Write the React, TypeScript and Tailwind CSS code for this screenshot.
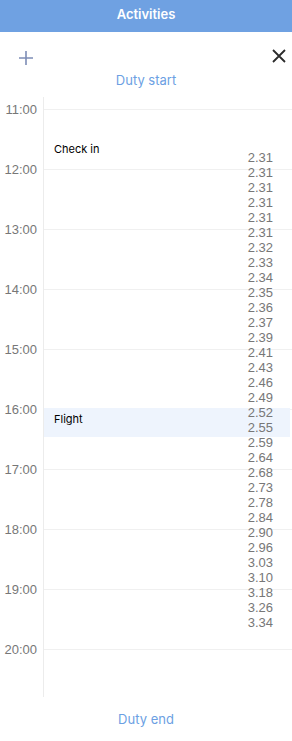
const hours = ["11:00", "12:00", "13:00", "14:00", "15:00", "16:00", "17:00", "18:00", "19:00", "20:00"];

const values = [
    "2.31", "2.31", "2.31", "2.31", "2.31", "2.31", "2.32", "2.33", "2.34", "2.35", "2.36",
    "2.37", "2.39", "2.41", "2.43", "2.46", "2.49", "2.52", "2.55", "2.59", "2.64", "2.68",
    "2.73", "2.78", "2.84", "2.90", "2.96", "3.03", "3.10", "3.18", "3.26", "3.34",
];

export default function App() {
    return (
        <main className="w-[292px] h-[741px] bg-white font-['Inter',sans-serif] overflow-hidden">
            <header className="h-8 bg-[#6fa1e2] flex items-center justify-center pb-[4px]">
                <h1 className="text-white font-semibold text-[13px] leading-none">Activities</h1>
            </header>

            <div className="h-[40px] flex items-start justify-between pl-[18px] pr-[5px]">
                <button className="mt-[18px] text-[#7d8db6]">
                    <svg width="16" height="16" viewBox="0 0 16 16" fill="none" stroke="currentColor" strokeWidth="1.6">
                        <path d="M8 1v14M1 8h14" />
                    </svg>
                </button>
                <button className="mt-[16px] text-[#2b2b2b]">
                    <svg width="16" height="16" viewBox="0 0 16 16" fill="none" stroke="currentColor" strokeWidth="1.8">
                        <path d="M2 2l12 12M14 2L2 14" />
                    </svg>
                </button>
            </div>

            <p className="text-center text-[13px] leading-[16px] text-[#6c9fe3]">Duty start</p>

            <section className="mt-[9px] h-[600px] flex">
                <div className="w-[43px] pt-[12px] font-['Liberation_Sans',sans-serif] text-[13px] text-[#777]">
                    {hours.map((h) => (
                        <div key={h} className="h-[60px] pr-[6px] text-right">
                            <span className="relative -top-[7px] block leading-[16px]">{h}</span>
                        </div>
                    ))}
                </div>

                <div className="relative flex-1 border-l border-[#ececec] pt-[12px]">
                    {hours.map((h, i) => (
                        <div key={h} className={`border-t border-[#f0f0f0] ${i === hours.length - 1 ? "h-[48px]" : "h-[60px]"}`} />
                    ))}

                    {/* activities placed by time */}
                    <div className="absolute left-0 right-0 top-[42px] h-[20px] pl-[10px] pt-[4px] text-[11px] leading-[13px] text-black">
                        Check in
                    </div>
                    <div className="absolute left-0 right-[2px] top-[311px] h-[29px] bg-[#eef4fd] pl-[10px] pt-[5px] text-[11px] leading-[13px] text-black">
                        Flight
                    </div>

                    <div className="absolute right-[19px] top-[53px] flex flex-col items-end font-['Liberation_Sans',sans-serif] text-[13px] leading-[15px] text-[#777]">
                        {values.map((v, i) => (
                            <span key={i}>{v}</span>
                        ))}
                    </div>
                </div>
            </section>

            <p className="mt-[14px] text-center text-[13px] leading-[16px] text-[#6c9fe3]">Duty end</p>
        </main>
    )
}
